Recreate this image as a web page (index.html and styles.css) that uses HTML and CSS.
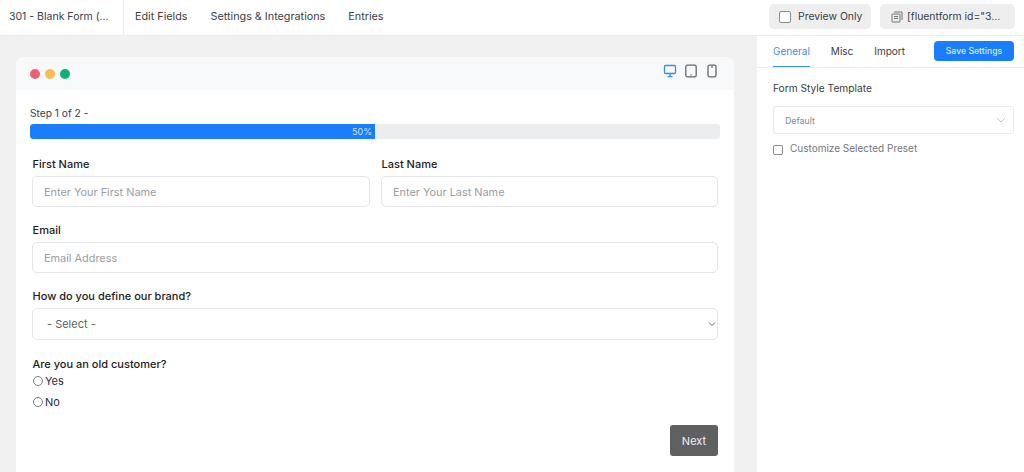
FILE: index.html
```html
<!DOCTYPE html>
<html lang="en">
<head>
<meta charset="utf-8">
<title>Form editor</title>
<link rel="stylesheet" href="styles.css">
</head>
<body>
<header class="topbar">
  <div class="form-title">301 - Blank Form (...</div>
  <nav class="topnav">
    <a>Edit Fields</a>
    <a>Settings &amp; Integrations</a>
    <a>Entries</a>
  </nav>
  <div class="top-actions">
    <div class="pill pill-preview"><span class="box"></span>Preview Only</div>
    <div class="pill pill-code">
      <svg class="copy" viewBox="0 0 12 12" width="12" height="12" fill="none" stroke="#777" stroke-width="1"><rect x="1" y="3" width="8" height="8" rx=".5"/><path d="M3 1h8v8M3 5.5h4M3 7.5h4"/></svg>
      [fluentform id="3...
    </div>
  </div>
</header>
<div class="main">
  <section class="canvas">
    <div class="card">
      <div class="card-head">
        <div class="dots"><i class="dot red"></i><i class="dot yellow"></i><i class="dot green"></i></div>
        <div class="devices">
          <svg viewBox="0 0 14 14" width="14" height="14" fill="none" stroke="#3b8de0" stroke-width="1.3"><rect x="1.5" y="1.5" width="11" height="8" rx="1"/><path d="M7 9.5v3M4.5 12.6h5"/></svg>
          <svg viewBox="0 0 14 14" width="14" height="14" fill="none" stroke="#666" stroke-width="1.3"><rect x="1.8" y="1.2" width="10.4" height="11.6" rx="1.6"/><path d="M6.5 11h1"/></svg>
          <svg viewBox="0 0 14 14" width="14" height="14" fill="none" stroke="#666" stroke-width="1.3"><rect x="3" y="1.2" width="8" height="11.6" rx="1.6"/><path d="M6 2.8h2"/></svg>
        </div>
      </div>
      <form class="form">
        <div class="step">Step 1 of 2 -</div>
        <div class="progress"><div class="progress-fill">50%</div></div>
        <div class="fields">
          <div class="row">
            <div class="field">
              <label class="label">First Name</label>
              <div class="input">Enter Your First Name</div>
            </div>
            <div class="field">
              <label class="label">Last Name</label>
              <div class="input">Enter Your Last Name</div>
            </div>
          </div>
          <div class="field">
            <label class="label">Email</label>
            <div class="input">Email Address</div>
          </div>
          <div class="field">
            <label class="label">How do you define our brand?</label>
            <div class="input select"><span class="select-text">- Select -</span>
              <svg viewBox="0 0 8 6" width="8" height="6" fill="none" stroke="#666" stroke-width="1"><path d="M1 1.5l3 3 3-3"/></svg>
            </div>
          </div>
          <div class="field radios">
            <label class="label">Are you an old customer?</label>
            <div class="radio"><span class="circle"></span>Yes</div>
            <div class="radio"><span class="circle"></span>No</div>
          </div>
        </div>
        <div class="form-foot"><span class="next">Next</span></div>
      </form>
    </div>
  </section>
  <aside class="sidebar">
    <div class="tabs">
      <a class="tab active">General</a>
      <a class="tab">Misc</a>
      <a class="tab">Import</a>
      <span class="save">Save Settings</span>
    </div>
    <div class="panel">
      <div class="panel-title">Form Style Template</div>
      <div class="panel-select">Default
        <svg viewBox="0 0 10 6" width="10" height="6" fill="none" stroke="#c4c8ce" stroke-width="1"><path d="M1 1l4 4 4-4"/></svg>
      </div>
      <div class="customize"><span class="small-box"></span>Customize Selected Preset</div>
    </div>
  </aside>
</div>
</body>
</html>
```
FILE: styles.css
```css
* { box-sizing: border-box; }
html, body { height: 100%; }
body {
  margin: 0;
  height: 472px;
  overflow: hidden;
  font-family: Inter, "Liberation Sans", sans-serif;
  color: #26282c;
  background: #fff;
  display: flex;
  flex-direction: column;
}
.topbar {
  height: 36px;
  flex: none;
  display: flex;
  align-items: stretch;
  background: #fff;
  border-bottom: 1px solid #ececec;
  font-size: 10.8px;
  color: #3c4046;
}
.form-title {
  width: 124px;
  padding-left: 9px;
  font-size: 10.5px;
  line-height: 34px;
  border-right: 1px solid #ececec;
}
.topnav {
  display: flex;
  gap: 23px;
  padding-left: 11px;
  line-height: 34px;
}
.top-actions {
  margin-left: auto;
  display: flex;
  gap: 9px;
  padding: 4px 9px 0 0;
  font-size: 10.4px;
}
.pill {
  height: 25px;
  background: #eeeeee;
  border-radius: 5px;
  display: flex;
  align-items: center;
}
.pill-preview { width: 102px; padding-left: 10px; }
.pill-code { width: 135px; padding-left: 11px; }
.box {
  width: 12px;
  height: 12px;
  border: 1px solid #8b8b8b;
  border-radius: 2px;
  background: #fff;
  margin-right: 7px;
}
.copy { margin-right: 4px; }
.main { flex: 1; display: flex; min-height: 0; }
.canvas {
  width: 757px;
  flex: none;
  background: #f1f1f1;
  padding: 21px 23px 0 16px;
}
.card {
  height: 420px;
  background: #fff;
  border-radius: 8px 8px 0 0;
}
.card-head {
  height: 33px;
  background: #f7f9fa;
  border-radius: 8px 8px 0 0;
  display: flex;
  align-items: center;
  justify-content: space-between;
  padding: 0 15px 0 14px;
}
.dots { display: flex; gap: 5px; }
.dot { width: 10px; height: 10px; border-radius: 50%; }
.red { background: #ef6071; }
.yellow { background: #fbbd4d; }
.green { background: #0bb273; }
.devices { display: flex; gap: 7px; margin-top: -6px; }
.form { padding: 17px 14px 0; }
.step { font-size: 10.2px; line-height: 13px; color: #3a3d42; }
.progress {
  height: 15px;
  margin-top: 4px;
  background: #ecedef;
  border-radius: 3px;
  overflow: hidden;
}
.progress-fill {
  width: 50%;
  height: 100%;
  background: #1a7efb;
  color: #cfe3fd;
  font-size: 9px;
  line-height: 15px;
  text-align: right;
  padding-right: 3px;
  border-radius: 3px 0 0 3px;
}
.fields {
  margin-top: 18px;
  padding: 0 2px;
  display: flex;
  flex-direction: column;
  gap: 16px;
}
.row { display: grid; grid-template-columns: 338px 337px; gap: 11px; }
.label {
  display: block;
  font-size: 11px;
  font-weight: 500;
  line-height: 14px;
  margin-bottom: 5px;
  padding-left: 0.5px;
  color: #1e2024;
}
.input {
  height: 31px;
  border: 1px solid #e3e5e8;
  border-radius: 5px;
  padding: 0 11px;
  font-size: 10.9px;
  line-height: 30px;
  color: #9a9da1;
}
.select {
  height: 32px;
  padding: 0 1px 0 14px;
  color: #5c5f64;
  font-size: 11px;
  display: flex;
  align-items: center;
  justify-content: space-between;
}
.select-text { line-height: 32px; }
.radios { margin-top: 1px; }
.radios .label { margin-bottom: 0; }
.radio {
  height: 21px;
  padding-bottom: 1px;
  display: flex;
  align-items: center;
  font-size: 11px;
  color: #2c2e32;
}
.circle {
  width: 10px;
  height: 10px;
  border: 1px solid #7d7d7d;
  border-radius: 50%;
  margin: -1px 2px 0 1px;
}
.form-foot { display: flex; justify-content: flex-end; padding: 12px 2px 0 0; }
.next {
  width: 48px;
  height: 31px;
  background: #5f6062;
  color: #f1f1f1;
  border-radius: 3px;
  font-size: 11px;
  line-height: 32px;
  text-align: center;
}
.sidebar { flex: 1; background: #fff; }
.tabs {
  height: 32px;
  border-bottom: 1px solid #ececec;
  display: flex;
  padding: 0 10px 0 16px;
  gap: 21px;
  font-size: 10px;
  color: #3a3d42;
  align-items: flex-start;
}
.tab { line-height: 30px; height: 31px; }
.tab.active { color: #3b8de0; border-bottom: 1.5px solid #3b8de0; }
.save {
  margin: 5px 0 0 auto;
  width: 80px;
  height: 20px;
  background: #1a7efb;
  color: #dbe9fd;
  border-radius: 4px;
  font-size: 8.7px;
  font-weight: 500;
  line-height: 20px;
  text-align: center;
}
.panel { padding: 14px 10px 0 16px; }
.panel-title { font-size: 10.2px; line-height: 13px; color: #3a3d42; }
.panel-select {
  margin-top: 11px;
  height: 28px;
  border: 1px solid #e8e9ec;
  border-radius: 3px;
  padding: 0 7px 0 11px;
  font-size: 8.8px;
  color: #85888d;
  display: flex;
  align-items: center;
  justify-content: space-between;
}
.customize {
  margin-top: 8px;
  display: flex;
  align-items: center;
  font-size: 10px;
  line-height: 13px;
  color: #73767b;
}
.small-box {
  width: 10px;
  height: 10px;
  border: 1px solid #8b8b8b;
  border-radius: 2px;
  margin: 2px 7px 0 0;
}
```
